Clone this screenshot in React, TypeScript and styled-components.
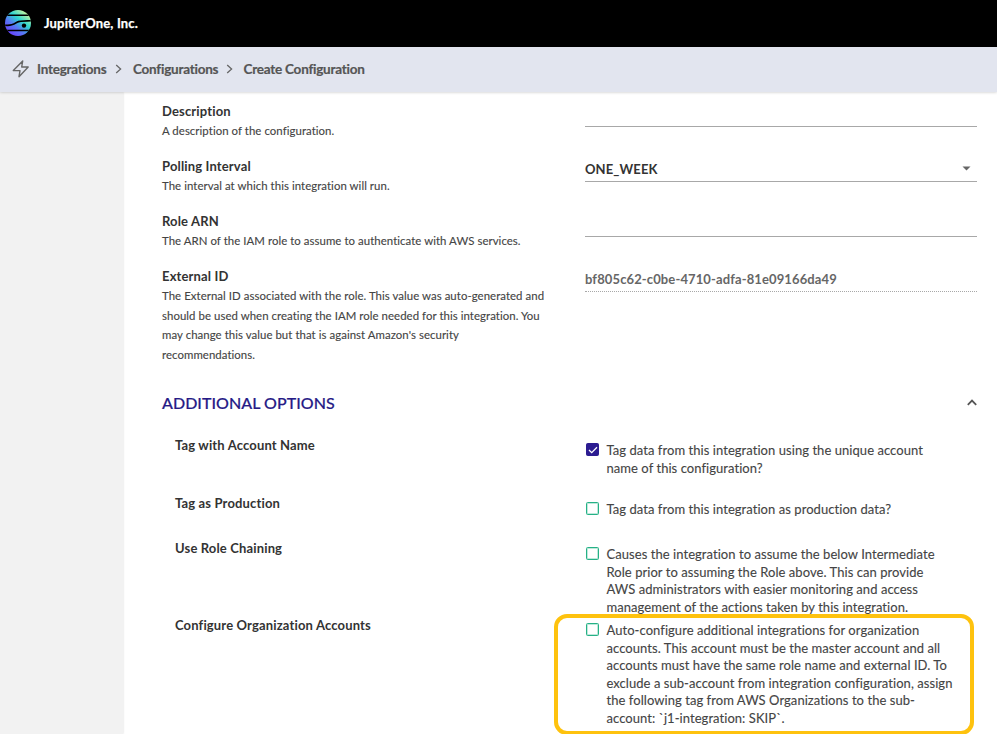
import React from "react";
import styled, { createGlobalStyle, css } from "styled-components";

const GlobalStyle = createGlobalStyle`
  *, *::before, *::after { box-sizing: border-box; }
  body { margin: 0; background: #fff; overflow: hidden; font-family: Lato, "Liberation Sans", sans-serif; }
`;

const Page = styled.div`
  display: flex;
  flex-direction: column;
  width: 997px;
  height: 734px;
  overflow: hidden;
  background: #fff;
`;

const TopBar = styled.header`
  display: flex;
  align-items: center;
  flex: 0 0 47px;
  gap: 12px;
  padding-left: 5px;
  background: #000;
`;

const Company = styled.div`
  margin-bottom: 2px;
  color: #fff;
  font-size: 13px;
  font-weight: 700;
  letter-spacing: 0.17px;
  line-height: 20px;
  -webkit-text-stroke: 0.25px #fff;
`;

const Breadcrumbs = styled.nav`
  display: flex;
  align-items: center;
  flex: 0 0 45px;
  padding: 0 0 1px 12px;
  background: #e2e5ef;
  box-shadow: 0 0 3px rgba(0, 0, 0, 0.25);
  z-index: 1;
`;

const Crumb = styled.span<{ $width: number }>`
  width: ${(p) => p.$width}px;
  color: #555;
  font-size: 13.5px;
  font-weight: 700;
  letter-spacing: -0.23px;
  line-height: 20px;
  white-space: nowrap;
  -webkit-text-stroke: 0.2px #555;
`;

const BoltIcon = styled.svg`
  margin-right: 7px;
`;

const CrumbArrow = styled.svg`
  margin: 0 11px 0 8px;
`;

const Body = styled.div`
  display: flex;
  flex: 1;
  min-height: 0;
`;

const Sidebar = styled.aside`
  flex: 0 0 123px;
  background: #f2f2f2;
  box-shadow: 0 0 2px rgba(0, 0, 0, 0.16);
`;

const Form = styled.main`
  flex: 1;
  padding: 9px 20px 0 39px;
`;

const Field = styled.div<{ $height: number }>`
  display: grid;
  grid-template-columns: 423px 1fr;
  align-items: start;
  height: ${(p) => p.$height}px;
`;

const Label = styled.div`
  color: #333;
  font-size: 13px;
  font-weight: 700;
  letter-spacing: 0.15px;
  line-height: 20px;
  white-space: nowrap;
`;

const Help = styled.div`
  color: #444;
  font-size: 11.4px;
  letter-spacing: 0.06px;
  line-height: 19.5px;
  white-space: nowrap;
  -webkit-text-stroke: 0.12px #444;
`;

const Control = styled.div<{ $disabled?: boolean }>`
  display: flex;
  align-items: center;
  justify-content: space-between;
  height: 26px;
  padding: 0 6px 0 0;
  border-bottom: 1px solid #a8a8a8;
  color: #333;
  font-size: 13px;
  font-weight: 700;
  letter-spacing: 0.12px;
  ${(p) =>
    p.$disabled &&
    css`
      border-bottom-style: dotted;
      color: #666;
    `}
`;

const SectionHeader = styled.div`
  display: flex;
  align-items: center;
  justify-content: space-between;
  height: 30px;
  margin-bottom: 17px;
`;

const SectionTitle = styled.h2`
  margin: 0;
  color: #261a86;
  font-size: 16px;
  font-weight: 500;
  letter-spacing: 0.04px;
  line-height: 24px;
  -webkit-text-stroke: 0.2px #261a86;
`;

const Chevron = styled.svg`
  margin-bottom: 2px;
`;

const Options = styled.div`
  padding-left: 13px;
`;

const Option = styled.div<{ $height: number }>`
  display: grid;
  grid-template-columns: 411px 1fr;
  align-items: start;
  height: ${(p) => p.$height}px;
`;

const Choice = styled.div<{ $offset: number }>`
  position: relative;
  display: flex;
  gap: 7.5px;
  padding-top: ${(p) => p.$offset}px;
`;

const Checkbox = styled.span<{ $checked?: boolean }>`
  display: flex;
  align-items: center;
  justify-content: center;
  flex: 0 0 13px;
  width: 13px;
  height: 13px;
  margin-top: 1px;
  border: 1px solid #26b186;
  border-radius: 1.5px;
  box-shadow: inset 0 0 0 0.5px #7fd3b8;
  ${(p) =>
    p.$checked &&
    css`
      border-color: #2c1c91;
      background: #2c1c91;
      box-shadow: none;
    `}
`;

const ChoiceText = styled.div`
  color: #444;
  font-size: 13px;
  letter-spacing: 0.055px;
  line-height: 17.55px;
  white-space: nowrap;
  -webkit-text-stroke: 0.12px #444;
`;

const Highlight = styled.div`
  position: absolute;
  left: -32px;
  top: -1px;
  width: 420px;
  height: 121px;
  border: 4px solid #fec20e;
  border-radius: 13px;
`;

const Logo = () => (
  <svg width="27" height="27" viewBox="0 0 27 27">
    <defs>
      <linearGradient id="planet" x1="0.15" y1="0.9" x2="0.8" y2="0.1">
        <stop offset="0" stopColor="#6a3cff" />
        <stop offset="0.35" stopColor="#5876f5" />
        <stop offset="0.65" stopColor="#2fd6cf" />
        <stop offset="1" stopColor="#c5f6a0" />
      </linearGradient>
      <clipPath id="disc">
        <circle cx="13" cy="13" r="13" />
      </clipPath>
    </defs>
    <g clipPath="url(#disc)">
      <rect width="27" height="27" fill="url(#planet)" />
      <path d="M0 5.2H27M0 15.2C6 15.8 8 14.6 12 12.2C15 10.5 20 11 27 10.8M0 20.5H27" stroke="#000" strokeWidth="1.6" fill="none" />
      <circle cx="19" cy="15.6" r="2.2" fill="#000" />
    </g>
  </svg>
);

const Separator = () => (
  <CrumbArrow width="7" height="10" viewBox="0 0 7 10">
    <path d="M1.2 1L5.6 5L1.2 9" fill="none" stroke="#666" strokeWidth="1.3" />
  </CrumbArrow>
);

const lines = (items: string[]) =>
  items.map((text, i) => (
    <React.Fragment key={text}>
      {i > 0 && <br />}
      {text}
    </React.Fragment>
  ));

const options = [
  {
    label: "Tag with Account Name",
    height: 58,
    offset: 7,
    checked: true,
    text: ["Tag data from this integration using the unique account", "name of this configuration?"],
  },
  {
    label: "Tag as Production",
    height: 45,
    offset: 8,
    text: ["Tag data from this integration as production data?"],
  },
  {
    label: "Use Role Chaining",
    height: 77,
    offset: 8,
    text: [
      "Causes the integration to assume the below Intermediate",
      "Role prior to assuming the Role above. This can provide",
      "AWS administrators with easier monitoring and access",
      "management of the actions taken by this integration.",
    ],
  },
  {
    label: "Configure Organization Accounts",
    height: 118,
    offset: 7,
    highlighted: true,
    text: [
      "Auto-configure additional integrations for organization",
      "accounts. This account must be the master account and all",
      "accounts must have the same role name and external ID. To",
      "exclude a sub-account from integration configuration, assign",
      "the following tag from AWS Organizations to the sub-",
      "account: `j1-integration: SKIP`.",
    ],
  },
];

export default function App() {
  return (
    <Page>
      <GlobalStyle />
      <TopBar>
        <Logo />
        <Company>JupiterOne, Inc.</Company>
      </TopBar>
      <Breadcrumbs>
        <BoltIcon width="18" height="18" viewBox="0 0 18 18">
          <path d="M10.7 1L1.3 10.6H8L7 16.7L16.2 7H9.7Z" fill="none" stroke="#666" strokeWidth="1.4" strokeLinejoin="round" />
        </BoltIcon>
        <Crumb $width={70}>Integrations</Crumb>
        <Separator />
        <Crumb $width={84.5}>Configurations</Crumb>
        <Separator />
        <Crumb $width={121}>Create Configuration</Crumb>
      </Breadcrumbs>
      <Body>
        <Sidebar />
        <Form>
          <Field $height={55}>
            <div>
              <Label>Description</Label>
              <Help>A description of the configuration.</Help>
            </div>
            <Control />
          </Field>
          <Field $height={55}>
            <div>
              <Label>Polling Interval</Label>
              <Help>The interval at which this integration will run.</Help>
            </div>
            <Control>
              ONE_WEEK
              <svg width="9" height="5" viewBox="0 0 9 5">
                <path d="M0.5 0.5H8.5L4.5 4.5Z" fill="#666" />
              </svg>
            </Control>
          </Field>
          <Field $height={55}>
            <div>
              <Label>Role ARN</Label>
              <Help>The ARN of the IAM role to assume to authenticate with AWS services.</Help>
            </div>
            <Control />
          </Field>
          <Field $height={122}>
            <div>
              <Label>External ID</Label>
              <Help>
                {lines([
                  "The External ID associated with the role. This value was auto-generated and",
                  "should be used when creating the IAM role needed for this integration. You",
                  "may change this value but that is against Amazon's security",
                  "recommendations.",
                ])}
              </Help>
            </div>
            <Control $disabled>bf805c62-c0be-4710-adfa-81e09166da49</Control>
          </Field>
          <SectionHeader>
            <SectionTitle>ADDITIONAL OPTIONS</SectionTitle>
            <Chevron width="10" height="7" viewBox="0 0 10 7">
              <path d="M0.8 5.8L5 1.6L9.2 5.8" fill="none" stroke="#555" strokeWidth="1.8" />
            </Chevron>
          </SectionHeader>
          <Options>
            {options.map((o) => (
              <Option key={o.label} $height={o.height}>
                <Label>{o.label}</Label>
                <Choice $offset={o.offset}>
                  {o.highlighted && <Highlight />}
                  <Checkbox $checked={o.checked}>
                    {o.checked && (
                      <svg width="10" height="8" viewBox="0 0 10 8">
                        <path d="M1 4L3.7 6.6L9 1.2" fill="none" stroke="#fff" strokeWidth="1.3" />
                      </svg>
                    )}
                  </Checkbox>
                  <ChoiceText>{lines(o.text)}</ChoiceText>
                </Choice>
              </Option>
            ))}
          </Options>
        </Form>
      </Body>
    </Page>
  );
}
